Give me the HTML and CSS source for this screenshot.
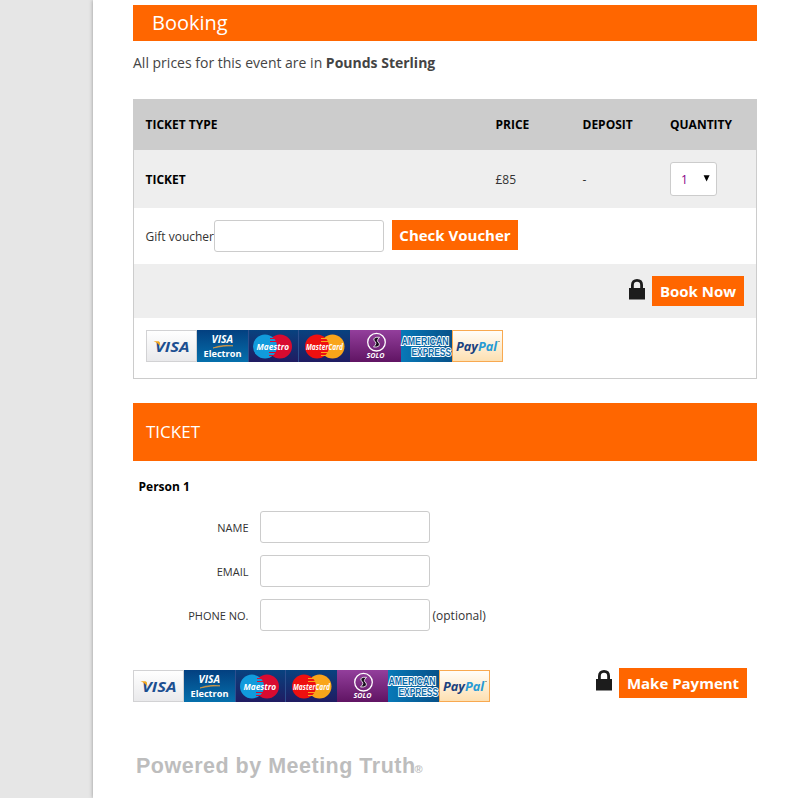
FILE: index.html
```html
<!DOCTYPE html>
<html lang="en">
<head>
<meta charset="utf-8">
<title>Booking</title>
<link rel="stylesheet" href="styles.css">
</head>
<body>
<main class="page">
  <h1 class="banner">Booking</h1>
  <p class="intro">All prices for this event are in <b>Pounds Sterling</b></p>

  <section class="tickets">
    <div class="row head"><span>TICKET TYPE</span><span>PRICE</span><span>DEPOSIT</span><span>QUANTITY</span></div>
    <div class="row item"><b>TICKET</b><span>£85</span><span>-</span>
      <div class="select"><span>1</span><svg width="8" height="7" viewBox="0 0 8 7"><path d="M0.6 0.3H6.6L3.6 6.6Z"/></svg></div>
    </div>
    <div class="voucher"><label for="voucher">Gift voucher</label><input id="voucher" class="field" type="text"><button class="btn check">Check Voucher</button></div>
    <div class="book">
      <svg class="lock" width="16" height="21" viewBox="0 0 16 21"><path d="M3.4 10V6C3.4 3 5.3 1.4 8 1.4S12.6 3 12.6 6V10" fill="none" stroke="#1c1c1c" stroke-width="2.8"/><rect y="9" width="16" height="11.5" fill="#1c1c1c"/></svg>
      <button class="btn now">Book Now</button>
    </div>
    <div class="accepted">
      <svg class="cards" width="357" height="32" viewBox="0 0 357 32">
        <defs>
          <linearGradient id="gv" x2="0" y2="1"><stop stop-color="#fff"/><stop offset="1" stop-color="#e9e9eb"/></linearGradient>
          <linearGradient id="ge" x2="0" y2="1"><stop stop-color="#034080"/><stop offset="1" stop-color="#0570ac"/></linearGradient>
          <linearGradient id="gm" x2="0" y2="1"><stop stop-color="#08427f"/><stop offset="1" stop-color="#201c62"/></linearGradient>
          <linearGradient id="gs" x2="0" y2="1"><stop stop-color="#933f9c"/><stop offset="1" stop-color="#601463"/></linearGradient>
          <linearGradient id="ga" x2="1" y2="0"><stop stop-color="#0879b8"/><stop offset="1" stop-color="#075189"/></linearGradient>
          <linearGradient id="gp" x2="0" y2="1"><stop stop-color="#fffefa"/><stop offset="1" stop-color="#fddfb0"/></linearGradient>
        </defs>
        <rect x=".5" y=".5" width="50" height="31" fill="url(#gv)" stroke="#d2d2d4"/>
        <text class="visa" x="9" y="22.3" font-size="15" textLength="34.5" lengthAdjust="spacingAndGlyphs" fill="#1c4f91">VISA</text>
        <path d="M7.5 11.3H12.4Q13.6 11.4 13.8 12.6L14.4 17Q12.4 13 7.5 11.3Z" fill="#f5a81c"/>
        <rect x="51" width="51" height="32" fill="url(#ge)"/>
        <text class="visa" x="65.5" y="12.8" font-size="10" textLength="21.5" lengthAdjust="spacingAndGlyphs" fill="#fff">VISA</text>
        <path d="M67 18Q75 14.4 87 15.8Q78 15.5 67 18Z" fill="#f2a33a" stroke="#f2a33a" stroke-width=".6"/>
        <text class="electron" x="57.5" y="27" textLength="38" lengthAdjust="spacingAndGlyphs">Electron</text>
        <rect x="102" width="51" height="32" fill="url(#gm)"/>
        <circle cx="134" cy="16.5" r="12" fill="#d80b30"/><circle cx="119" cy="16.5" r="12" fill="#119bdc"/>
        <path d="M124 8.5h7M124 11.5h8M123 22.5h8M123 25.5h7" stroke="#d80b30"/>
        <text class="brand" x="110.5" y="19.6" font-size="9" textLength="32.5" lengthAdjust="spacingAndGlyphs">Maestro</text>
        <rect x="153" width="51" height="32" fill="url(#gm)"/>
        <circle cx="186.5" cy="16.5" r="12" fill="#f9a51a"/><circle cx="171" cy="16.5" r="12" fill="#ee1010"/>
        <path d="M175 8.5h7M175 11.5h8M175 22.5h8M175 25.5h7" stroke="#f9a51a"/>
        <text class="brand" x="160" y="19.5" font-size="8.5" textLength="37" lengthAdjust="spacingAndGlyphs">MasterCard</text>
        <path d="M102.5 0V32M152.5 0V32" stroke="#2d4f8e"/>
        <rect x="204" width="51" height="32" fill="url(#gs)"/>
        <circle cx="230.5" cy="12.2" r="8.8" fill="none" stroke="#fff" stroke-width="1.3"/>
        <path d="M233.5 7.3Q226.8 6.8 228 10.5Q232 13 227.5 17Q235 17.5 233 12.8Q229.5 11 233.5 7.3Z" fill="#160a1a" stroke="#fff" stroke-width=".8"/>
        <text class="solo" x="220.5" y="28.4" textLength="18" lengthAdjust="spacingAndGlyphs">SOLO</text>
        <rect x="255" width="51" height="32" fill="url(#ga)"/>
        <text class="amex" x="255.5" y="15.3" textLength="47" lengthAdjust="spacingAndGlyphs">AMERICAN</text>
        <text class="amex" x="265.5" y="26" textLength="39.5" lengthAdjust="spacingAndGlyphs">EXPRESS</text>
        <rect x="306.5" y=".5" width="50" height="31" fill="url(#gp)" stroke="#f8a950"/>
        <text class="paypal" x="310" y="20.8" textLength="41" lengthAdjust="spacingAndGlyphs">Pay<tspan fill="#269ad5">Pal</tspan></text>
        <path d="M352 11.5h2" stroke="#777" stroke-width=".7"/>
      </svg>
    </div>
  </section>

  <h2 class="ticket-title">TICKET</h2>
  <h3 class="person">Person 1</h3>
  <form class="form">
    <label for="name">NAME</label><input id="name" class="field" type="text"><span></span>
    <label for="email">EMAIL</label><input id="email" class="field" type="text"><span></span>
    <label for="phone">PHONE NO.</label><input id="phone" class="field" type="text"><span class="optional">(optional)</span>
  </form>

  <div class="payment">
    <svg class="cards" width="357" height="32" viewBox="0 0 357 32">
      <rect x=".5" y=".5" width="50" height="31" fill="url(#gv)" stroke="#d2d2d4"/>
      <text class="visa" x="9" y="22.3" font-size="15" textLength="34.5" lengthAdjust="spacingAndGlyphs" fill="#1c4f91">VISA</text>
      <path d="M7.5 11.3H12.4Q13.6 11.4 13.8 12.6L14.4 17Q12.4 13 7.5 11.3Z" fill="#f5a81c"/>
      <rect x="51" width="51" height="32" fill="url(#ge)"/>
      <text class="visa" x="65.5" y="12.8" font-size="10" textLength="21.5" lengthAdjust="spacingAndGlyphs" fill="#fff">VISA</text>
      <path d="M67 18Q75 14.4 87 15.8Q78 15.5 67 18Z" fill="#f2a33a" stroke="#f2a33a" stroke-width=".6"/>
      <text class="electron" x="57.5" y="27" textLength="38" lengthAdjust="spacingAndGlyphs">Electron</text>
      <rect x="102" width="51" height="32" fill="url(#gm)"/>
      <circle cx="134" cy="16.5" r="12" fill="#d80b30"/><circle cx="119" cy="16.5" r="12" fill="#119bdc"/>
      <path d="M124 8.5h7M124 11.5h8M123 22.5h8M123 25.5h7" stroke="#d80b30"/>
      <text class="brand" x="110.5" y="19.6" font-size="9" textLength="32.5" lengthAdjust="spacingAndGlyphs">Maestro</text>
      <rect x="153" width="51" height="32" fill="url(#gm)"/>
      <circle cx="186.5" cy="16.5" r="12" fill="#f9a51a"/><circle cx="171" cy="16.5" r="12" fill="#ee1010"/>
      <path d="M175 8.5h7M175 11.5h8M175 22.5h8M175 25.5h7" stroke="#f9a51a"/>
      <text class="brand" x="160" y="19.5" font-size="8.5" textLength="37" lengthAdjust="spacingAndGlyphs">MasterCard</text>
      <path d="M102.5 0V32M152.5 0V32" stroke="#2d4f8e"/>
      <rect x="204" width="51" height="32" fill="url(#gs)"/>
      <circle cx="230.5" cy="12.2" r="8.8" fill="none" stroke="#fff" stroke-width="1.3"/>
      <path d="M233.5 7.3Q226.8 6.8 228 10.5Q232 13 227.5 17Q235 17.5 233 12.8Q229.5 11 233.5 7.3Z" fill="#160a1a" stroke="#fff" stroke-width=".8"/>
      <text class="solo" x="220.5" y="28.4" textLength="18" lengthAdjust="spacingAndGlyphs">SOLO</text>
      <rect x="255" width="51" height="32" fill="url(#ga)"/>
      <text class="amex" x="255.5" y="15.3" textLength="47" lengthAdjust="spacingAndGlyphs">AMERICAN</text>
      <text class="amex" x="265.5" y="26" textLength="39.5" lengthAdjust="spacingAndGlyphs">EXPRESS</text>
      <rect x="306.5" y=".5" width="50" height="31" fill="url(#gp)" stroke="#f8a950"/>
      <text class="paypal" x="310" y="20.8" textLength="41" lengthAdjust="spacingAndGlyphs">Pay<tspan fill="#269ad5">Pal</tspan></text>
      <path d="M352 11.5h2" stroke="#777" stroke-width=".7"/>
    </svg>
    <svg class="lock" width="16" height="21" viewBox="0 0 16 21"><path d="M3.4 10V6C3.4 3 5.3 1.4 8 1.4S12.6 3 12.6 6V10" fill="none" stroke="#1c1c1c" stroke-width="2.8"/><rect y="9" width="16" height="11.5" fill="#1c1c1c"/></svg>
    <button class="btn pay">Make Payment</button>
  </div>

  <footer class="powered"><span>Powered by Meeting Truth</span><small>®</small></footer>
</main>
</body>
</html>
```
FILE: styles.css
```css
* { box-sizing: border-box; }
html, body { margin: 0; height: 798px; overflow: hidden; }
body {
  padding-left: 93px;
  background: #e6e6e6;
  font-family: "Open Sans", sans-serif;
  font-size: 12px;
  color: #333;
}
.page {
  height: 798px;
  padding: 5px 28px 0 40px;
  background: #fff;
  box-shadow: 0 0 4px rgba(0, 0, 0, .35);
}
h1, h2, h3, p { margin: 0; }
.banner {
  height: 36px;
  padding-left: 19px;
  background: #f60;
  color: #fff;
  font-size: 20px;
  font-weight: 400;
  line-height: 35px;
}
.intro {
  height: 58px;
  padding-top: 11px;
  font-size: 14px;
  line-height: 21px;
  color: #444;
}
.tickets {
  height: 280px;
  border: 1px solid #ccc;
}
.row {
  display: grid;
  grid-template-columns: 350px 87px 87.5px 1fr;
  align-items: center;
  padding-left: 11.5px;
}
.head {
  height: 50px;
  padding-bottom: 2px;
  background: #ccc;
  color: #000;
  font-weight: 700;
}
.item { height: 58px; background: #eee; }
.item b { color: #000; }
.select {
  display: flex;
  align-items: center;
  justify-content: space-between;
  width: 47px;
  height: 34px;
  padding: 1px 5px 0 10px;
  border: 1px solid #ccc;
  border-radius: 3px;
  background: #fff;
  color: #808;
}
.select svg { margin-top: -2px; fill: #000; }
.voucher {
  display: flex;
  align-items: flex-start;
  height: 56px;
  padding: 12px 0 0 11.5px;
}
.voucher label { width: 68.5px; line-height: 34px; white-space: nowrap; }
.field {
  width: 170px;
  height: 32px;
  padding: 0 8px;
  border: 1px solid #ccc;
  border-radius: 3px;
  background: #fff;
}
.btn {
  height: 30px;
  padding: 0;
  border: 0;
  background: #f60;
  color: #fff;
  font: 700 15px/30px "Open Sans", sans-serif;
  white-space: nowrap;
}
.check { width: 126px; margin-left: 8px; }
.book {
  display: flex;
  justify-content: flex-end;
  height: 54px;
  padding: 12px 12px 0 0;
  background: #eee;
}
.now { width: 92px; }
.lock { margin: 3px 7px 0 0; }
.accepted { padding: 12px 0 0 12px; }
.cards { display: block; }
.visa { font-family: "Open Sans", sans-serif; font-weight: 700; font-style: italic; }
.electron { font: 700 9px "Open Sans", sans-serif; fill: #fff; }
.brand { font-family: "Open Sans", sans-serif; font-weight: 700; font-style: italic; fill: #fff; }
.solo { font: italic 700 6.5px "Open Sans", sans-serif; fill: #fff; }
.amex {
  font: 700 10px "Liberation Sans", sans-serif;
  fill: #0869a8;
  stroke: #fff;
  stroke-width: 2px;
  paint-order: stroke;
}
.paypal { font: italic 700 13px "Open Sans", sans-serif; fill: #19417f; }
.ticket-title {
  height: 58px;
  margin-top: 24px;
  padding-left: 13px;
  background: #f60;
  color: #fff;
  font-size: 17px;
  font-weight: 400;
  line-height: 58px;
}
.person {
  height: 50px;
  padding: 17px 0 0 5.5px;
  color: #000;
  font-size: 12px;
  line-height: 18px;
}
.form {
  display: grid;
  grid-template-columns: 115.5px 170px 1fr;
  column-gap: 11.5px;
  row-gap: 12px;
  align-items: center;
}
.form label { font-size: 11px; text-align: right; }
.optional { margin-left: -9px; }
.payment {
  display: flex;
  align-items: flex-start;
  height: 32px;
  margin-top: 37px;
  padding-right: 10px;
}
.payment .cards { margin: 2px auto 0 0; }
.payment .lock { margin-top: 2px; }
.pay { width: 128px; }
.powered {
  display: flex;
  align-items: baseline;
  margin: 52px 0 0 3px;
  color: #bdbdbd;
  font: 700 21.5px/28px "Liberation Sans", sans-serif;
}
.powered span { letter-spacing: .5px; }
.powered small { margin-left: -1px; font-size: 11px; }
```
